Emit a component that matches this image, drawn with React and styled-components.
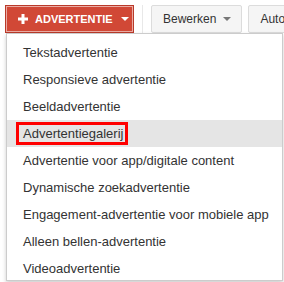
import React from 'react'
import styled, { createGlobalStyle } from 'styled-components'

const Global = createGlobalStyle`
  html, body {
    margin: 0;
    padding: 0;
    background: #fff;
  }
  body {
    font-family: Arial, "Liberation Sans", sans-serif;
    width: 284px;
    height: 282px;
    overflow: hidden;
  }
`

const items = [
  'Tekstadvertentie',
  'Responsieve advertentie',
  'Beeldadvertentie',
  'Advertentiegalerij',
  'Advertentie voor app/digitale content',
  'Dynamische zoekadvertentie',
  'Engagement-advertentie voor mobiele app',
  'Alleen bellen-advertentie',
  'Videoadvertentie',
]

export default function App() {
  const selected = 'Advertentiegalerij'

  return (
    <Page>
      <Global />
      <Toolbar>
        <PrimaryButton>
          <PlusIcon />
          ADVERTENTIE
          <Caret $color="#fff" />
        </PrimaryButton>
        <Separator />
        <GreyButton>
          Bewerken
          <Caret $color="#777" />
        </GreyButton>
        <GreyButton>Automatisch</GreyButton>
      </Toolbar>
      <Menu>
        {items.map((label) => (
          <Item key={label} $active={label === selected}>
            {label === selected ? <Marked>{label}</Marked> : label}
          </Item>
        ))}
      </Menu>
    </Page>
  )
}

const PlusIcon = () => (
  <svg width="10" height="10" viewBox="0 0 10 10">
    <rect x="3.5" y="0" width="3" height="10" fill="#fff" />
    <rect x="0" y="3.5" width="10" height="3" fill="#fff" />
  </svg>
)

const Page = styled.div`
  position: relative;
  width: 284px;
  height: 282px;
  overflow: hidden;
`

const Toolbar = styled.div`
  display: flex;
  align-items: flex-start;
  padding: 5px 0 0 5px;
  white-space: nowrap;

  & > * {
    flex-shrink: 0;
  }
`

const PrimaryButton = styled.div`
  display: flex;
  align-items: center;
  gap: 7px;
  box-sizing: border-box;
  width: 129px;
  height: 28px;
  padding: 0 0 0 12px;
  background: #d14836;
  border: 1px solid #b93a2a;
  box-shadow: inset 0 0 0 1px rgba(255, 255, 255, 0.55);
  color: #fff;
  font-size: 11px;
  font-weight: bold;
`

const Caret = styled.span`
  width: 0;
  height: 0;
  margin-left: 1px;
  border-left: 4px solid transparent;
  border-right: 4px solid transparent;
  border-top: 4px solid ${(p) => p.$color};
`

const Separator = styled.div`
  width: 1px;
  height: 29px;
  margin: 0 8px;
  background: #e8e8e8;
`

const GreyButton = styled.div`
  display: flex;
  align-items: center;
  gap: 6px;
  box-sizing: border-box;
  height: 28px;
  padding: 0 10px 0 11px;
  margin-right: 6px;
  background: #f5f5f5;
  border: 1px solid #dcdcdc;
  border-radius: 2px;
  color: #333;
  font-size: 12px;
`

const Menu = styled.div`
  position: absolute;
  left: 6px;
  top: 33px;
  width: 277px;
  box-sizing: border-box;
  padding: 5px 0 0;
  height: 248px;
  background: #fff;
  border: 1px solid rgba(0, 0, 0, 0.2);
  box-shadow: 0 2px 4px rgba(0, 0, 0, 0.2);
`

const Item = styled.div`
  display: flex;
  align-items: center;
  height: 27px;
  padding-left: 16px;
  background: ${(p) => (p.$active ? '#e5e5e5' : 'transparent')};
  color: #333;
  font-size: 13px;
  white-space: nowrap;
`

const Marked = styled.span`
  margin-left: -7px;
  padding: 1px 2px 1px 4px;
  border: 3px solid #f00;
`
